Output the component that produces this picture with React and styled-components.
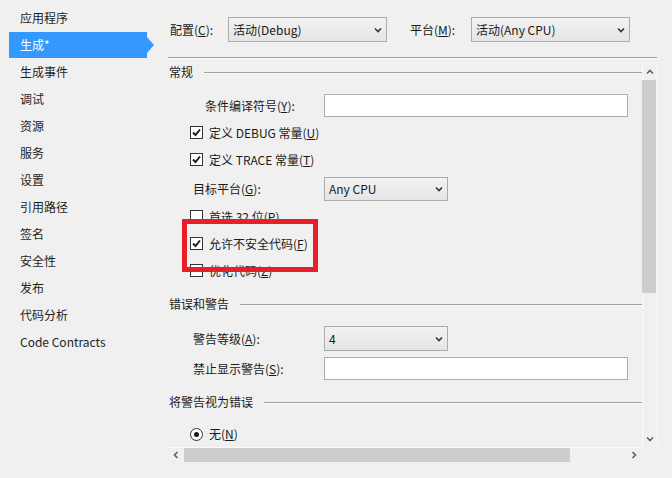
import React from 'react';
import styled, { createGlobalStyle } from 'styled-components';

const Global = createGlobalStyle`
  html, body { margin: 0; padding: 0; background: #f0f0f0; }
  body {
    font-family: "Noto Sans CJK SC", "Noto Sans", sans-serif;
    font-size: 12px;
    color: #1a1a1a;
  }
  #root { width: 672px; height: 478px; overflow: hidden; }
  u { text-underline-offset: 1px; }
`;

const Window = styled.div`
  display: flex;
  width: 672px;
  height: 478px;
  background: #f0f0f0;
`;

const Sidebar = styled.nav`
  width: 168px;
  flex: none;
  box-sizing: border-box;
  padding-top: 5px;
  display: flex;
  flex-direction: column;
  gap: 1px;
`;

const NavItem = styled.div`
  position: relative;
  height: 26px;
  width: 138px;
  margin-left: 9px;
  padding-left: 11px;
  box-sizing: border-box;
  display: flex;
  align-items: center;
  line-height: 16px;
  color: ${p => (p.$active ? '#ffffff' : '#1e1e1e')};
  background: ${p => (p.$active ? '#3399ff' : 'transparent')};
  &::after {
    content: '';
    display: ${p => (p.$active ? 'block' : 'none')};
    position: absolute;
    right: -7px;
    top: 5px;
    border-left: 7px solid #3399ff;
    border-top: 8px solid transparent;
    border-bottom: 8px solid transparent;
  }
`;

const Main = styled.div`
  flex: 1;
  display: flex;
  flex-direction: column;
`;

const TopBar = styled.div`
  height: 57px;
  box-sizing: border-box;
  padding: 2px 0 0 2px;
  display: flex;
  align-items: center;
`;

const TopLabel = styled.span`
  width: ${p => p.$w}px;
  flex: none;
  line-height: 16px;
  white-space: nowrap;
`;

const Combo = styled.div`
  width: ${p => p.$w}px;
  height: ${p => p.$h || 24}px;
  flex: none;
  box-sizing: border-box;
  border: 1px solid #acacac;
  background: linear-gradient(#f2f2f2, #e5e5e5);
  display: flex;
  align-items: center;
  justify-content: space-between;
  padding: 0 4px 0 4px;
  margin-right: ${p => p.$mr || 0}px;
  line-height: 16px;
  color: #1a1a1a;
`;

const TextBox = styled.div`
  width: ${p => p.$w}px;
  height: 23px;
  flex: none;
  box-sizing: border-box;
  border: 1px solid #abadb3;
  background: #ffffff;
`;

const Separator = styled.div`
  width: 489px;
  height: 1px;
  background: #a0a0a0;
  box-shadow: 0 1px 0 #fbfbfb;
`;

const ScrollFrame = styled.div`
  margin-top: 6px;
  width: 490px;
  height: 399px;
  display: grid;
  grid-template-columns: 474px 16px;
  grid-template-rows: 383px 16px;
`;

const Viewport = styled.div`
  overflow: hidden;
  display: flex;
  flex-direction: column;
`;

const Heading = styled.div`
  height: 16px;
  flex: none;
  margin-top: ${p => p.$mt || 0}px;
  padding-left: 1px;
  display: flex;
  align-items: center;
  line-height: 16px;
  white-space: nowrap;
  &::after {
    content: '';
    flex: 1;
    height: 1px;
    margin-left: 11px;
    background: #a0a0a0;
    box-shadow: 0 1px 0 #fbfbfb;
  }
`;

const FieldRow = styled.div`
  display: flex;
  align-items: center;
  flex: none;
  margin-top: ${p => p.$mt || 0}px;
`;

const FieldLabel = styled.span`
  width: 156px;
  flex: none;
  box-sizing: border-box;
  padding-left: ${p => p.$indent}px;
  line-height: 16px;
  white-space: nowrap;
`;

const CheckGroup = styled.div`
  position: relative;
  margin-top: 2px;
  flex: none;
  display: flex;
  flex-direction: column;
`;

const CheckRow = styled.div`
  height: ${p => p.$h || 27}px;
  flex: none;
  margin-top: ${p => p.$mt || 0}px;
  padding-left: 22px;
  display: flex;
  align-items: center;
  gap: 6px;
  line-height: 16px;
  white-space: nowrap;
`;

const Box = styled.span`
  width: 13px;
  height: 13px;
  flex: none;
  box-sizing: border-box;
  border: 1px solid #333333;
  background: #ffffff;
  display: flex;
  align-items: center;
  justify-content: center;
`;

const RadioRing = styled.span`
  width: 13px;
  height: 13px;
  flex: none;
  box-sizing: border-box;
  border: 1px solid #333333;
  border-radius: 50%;
  background: #ffffff;
  display: flex;
  align-items: center;
  justify-content: center;
  &::after {
    content: '';
    width: 5px;
    height: 5px;
    border-radius: 50%;
    background: #1a1a1a;
  }
`;

const Highlight = styled.div`
  position: absolute;
  left: 14px;
  top: 16px;
  width: 136px;
  height: 53px;
  box-sizing: border-box;
  border: 5px solid #e61f29;
  pointer-events: none;
`;

const VScroll = styled.div`
  display: flex;
  flex-direction: column;
  background: #f0f0f0;
  box-shadow: inset 1px 0 0 #fafafa, inset -1px 0 0 #fafafa;
`;

const HScroll = styled.div`
  display: flex;
  background: #f0f0f0;
  box-shadow: inset 0 1px 0 #fafafa;
`;

const ArrowBtn = styled.div`
  width: 16px;
  height: 16px;
  flex: none;
  display: flex;
  align-items: center;
  justify-content: center;
`;

const Spacer = styled.div`
  flex: ${p => (p.$fixed ? 'none' : 1)};
  width: ${p => (p.$fixed ? `${p.$fixed}px` : 'auto')};
`;

const VThumb = styled.div`
  height: 213px;
  margin: 0 2px 0 0;
  background: #cdcdcd;
  flex: none;
`;

const HThumb = styled.div`
  width: 386px;
  margin: 1px 0;
  background: #cdcdcd;
  flex: none;
`;

const Chevron = ({ dir = 'down', color = '#333' }) => {
  const paths = {
    down: 'M1 1.5 L4 4.5 L7 1.5',
    up: 'M1 4.5 L4 1.5 L7 4.5',
    left: 'M4.5 1 L1.5 4 L4.5 7',
    right: 'M1.5 1 L4.5 4 L1.5 7',
  };
  const vertical = dir === 'down' || dir === 'up';
  return (
    <svg width={vertical ? 8 : 6} height={vertical ? 6 : 8} viewBox={vertical ? '0 0 8 6' : '0 0 6 8'}>
      <path d={paths[dir]} fill="none" stroke={color} strokeWidth="1.6" />
    </svg>
  );
};

const Check = ({ checked }) => (
  <Box>
    {checked && (
      <svg width="11" height="11" viewBox="0 0 11 11">
        <path d="M2 5.5 L4.5 8 L9 2.5" fill="none" stroke="#1a1a1a" strokeWidth="1.9" />
      </svg>
    )}
  </Box>
);

const navItems = [
  '应用程序', '生成*', '生成事件', '调试', '资源', '服务', '设置',
  '引用路径', '签名', '安全性', '发布', '代码分析', 'Code Contracts',
];

export default function App() {
  return (
    <>
      <Global />
      <Window>
        <Sidebar>
          {navItems.map((n, i) => (
            <NavItem key={n} $active={i === 1}>{n}</NavItem>
          ))}
        </Sidebar>
        <Main>
          <TopBar>
            <TopLabel $w={58}>配置(<u>C</u>):</TopLabel>
            <Combo $w={159} $h={25} $mr={23}>
              <span>活动(Debug)</span>
              <Chevron />
            </Combo>
            <TopLabel $w={61}>平台(<u>M</u>):</TopLabel>
            <Combo $w={159} $h={25}>
              <span>活动(Any CPU)</span>
              <Chevron />
            </Combo>
          </TopBar>
          <Separator />
          <ScrollFrame>
            <Viewport>
              <Heading>常规</Heading>
              <FieldRow $mt={14}>
                <FieldLabel $indent={37}>条件编译符号(<u>Y</u>):</FieldLabel>
                <TextBox $w={304} />
              </FieldRow>
              <CheckRow $mt={2}>
                <Check checked />
                <span>定义 DEBUG 常量(<u>U</u>)</span>
              </CheckRow>
              <CheckRow>
                <Check checked />
                <span>定义 TRACE 常量(<u>T</u>)</span>
              </CheckRow>
              <FieldRow $mt={4}>
                <FieldLabel $indent={25}>目标平台(<u>G</u>):</FieldLabel>
                <Combo $w={124}>
                  <span>Any CPU</span>
                  <Chevron />
                </Combo>
              </FieldRow>
              <CheckGroup>
                <CheckRow>
                  <Check />
                  <span>首选 32 位(<u>P</u>)</span>
                </CheckRow>
                <CheckRow>
                  <Check checked />
                  <span>允许不安全代码(<u>F</u>)</span>
                </CheckRow>
                <CheckRow>
                  <Check />
                  <span>优化代码(<u>Z</u>)</span>
                </CheckRow>
                <Highlight />
              </CheckGroup>
              <Heading $mt={12}>错误和警告</Heading>
              <FieldRow $mt={14}>
                <FieldLabel $indent={25}>警告等级(<u>A</u>):</FieldLabel>
                <Combo $w={124} $h={25}>
                  <span>4</span>
                  <Chevron />
                </Combo>
              </FieldRow>
              <FieldRow $mt={6}>
                <FieldLabel $indent={25}>禁止显示警告(<u>S</u>):</FieldLabel>
                <TextBox $w={304} />
              </FieldRow>
              <Heading $mt={14}>将警告视为错误</Heading>
              <CheckRow $mt={14} $h={20}>
                <RadioRing />
                <span>无(<u>N</u>)</span>
              </CheckRow>
            </Viewport>
            <VScroll>
              <ArrowBtn><Chevron dir="up" color="#606060" /></ArrowBtn>
              <VThumb />
              <Spacer />
              <ArrowBtn><Chevron dir="down" color="#606060" /></ArrowBtn>
            </VScroll>
            <HScroll>
              <ArrowBtn><Chevron dir="left" color="#606060" /></ArrowBtn>
              <HThumb />
              <Spacer />
              <ArrowBtn><Chevron dir="right" color="#606060" /></ArrowBtn>
            </HScroll>
            <div />
          </ScrollFrame>
        </Main>
      </Window>
    </>
  );
}
